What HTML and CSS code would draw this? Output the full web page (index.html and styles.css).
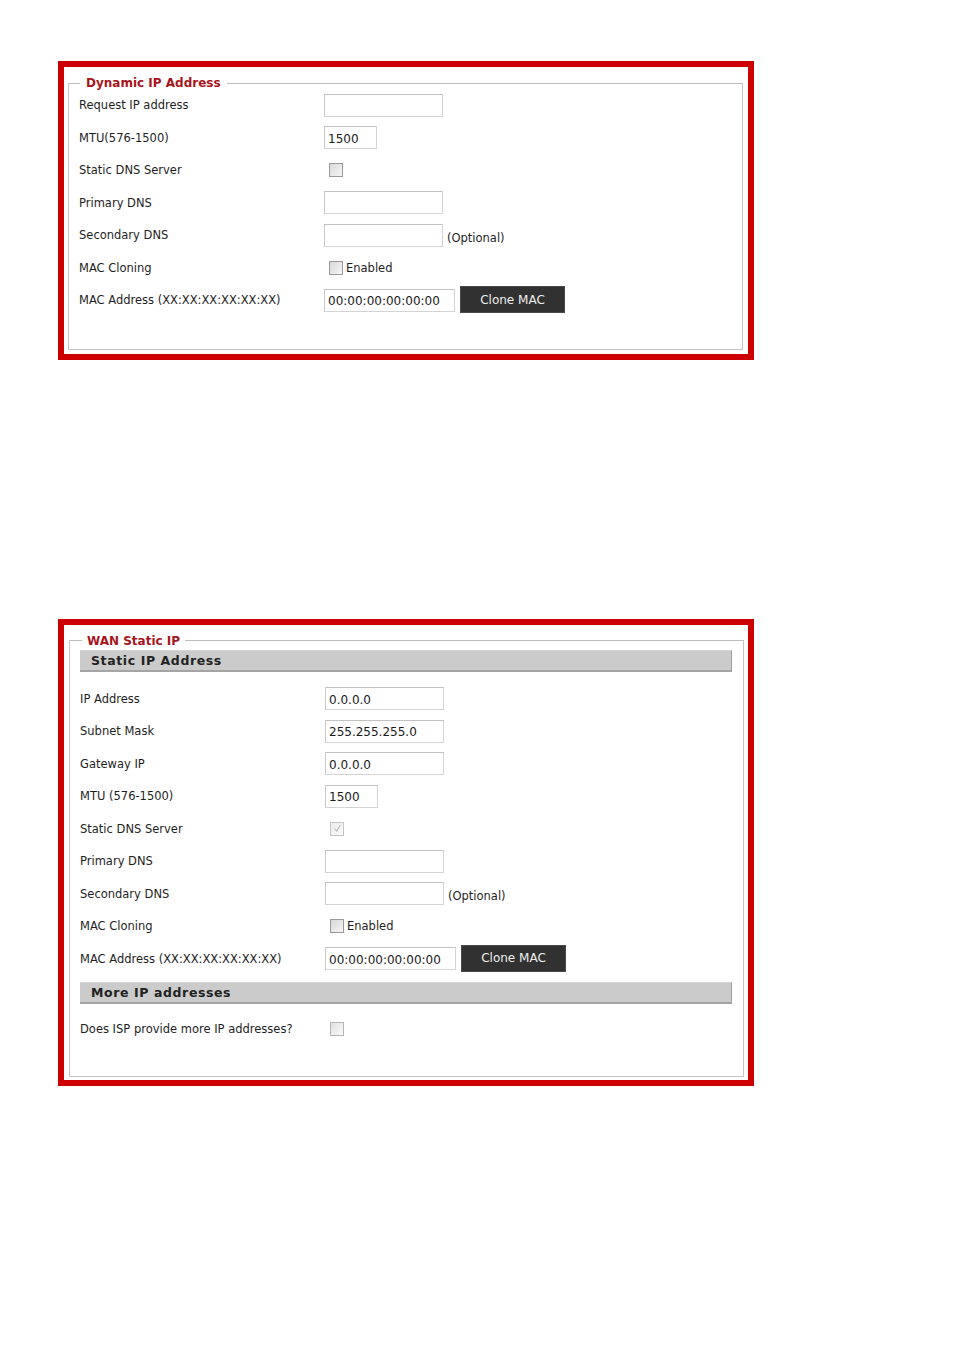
FILE: index.html
```html
<!DOCTYPE html>
<html lang="en">
<head>
    <meta charset="UTF-8">
    <meta name="viewport" content="width=device-width, initial-scale=1.0">
    <title>WAN Settings</title>
    <link rel="stylesheet" href="styles.css">
</head>
<body>
    <div class="frame frame-dynamic">
        <fieldset>
            <legend>Dynamic IP Address</legend>
            <div class="row">
                <span class="label">Request IP address</span>
                <span class="field"><input type="text" class="text"></span>
            </div>
            <div class="row">
                <span class="label">MTU(576-1500)</span>
                <span class="field"><input type="text" class="text short" value="1500"></span>
            </div>
            <div class="row">
                <span class="label">Static DNS Server</span>
                <span class="field"><span class="check"></span></span>
            </div>
            <div class="row">
                <span class="label">Primary DNS</span>
                <span class="field"><input type="text" class="text"></span>
            </div>
            <div class="row">
                <span class="label">Secondary DNS</span>
                <span class="field"><input type="text" class="text"><span class="note">(Optional)</span></span>
            </div>
            <div class="row">
                <span class="label">MAC Cloning</span>
                <span class="field"><span class="check"></span><span class="check-text">Enabled</span></span>
            </div>
            <div class="row">
                <span class="label">MAC Address (XX:XX:XX:XX:XX:XX)</span>
                <span class="field">
                    <input type="text" class="text mac" value="00:00:00:00:00:00">
                    <button class="btn">Clone MAC</button>
                </span>
            </div>
        </fieldset>
    </div>

    <div class="frame frame-static">
        <fieldset>
            <legend>WAN Static IP</legend>
            <div class="bar">Static IP Address</div>
            <div class="rows">
                <div class="row">
                    <span class="label">IP Address</span>
                    <span class="field"><input type="text" class="text" value="0.0.0.0"></span>
                </div>
                <div class="row">
                    <span class="label">Subnet Mask</span>
                    <span class="field"><input type="text" class="text" value="255.255.255.0"></span>
                </div>
                <div class="row">
                    <span class="label">Gateway IP</span>
                    <span class="field"><input type="text" class="text" value="0.0.0.0"></span>
                </div>
                <div class="row">
                    <span class="label">MTU (576-1500)</span>
                    <span class="field"><input type="text" class="text short" value="1500"></span>
                </div>
                <div class="row">
                    <span class="label">Static DNS Server</span>
                    <span class="field">
                        <span class="check checked">
                            <svg viewBox="0 0 13 13" width="11" height="11"><path d="M3 6.5 L5.5 9.5 L10 2.5" fill="none" stroke="#b8b8b8" stroke-width="1.2"/></svg>
                        </span>
                    </span>
                </div>
                <div class="row">
                    <span class="label">Primary DNS</span>
                    <span class="field"><input type="text" class="text"></span>
                </div>
                <div class="row">
                    <span class="label">Secondary DNS</span>
                    <span class="field"><input type="text" class="text"><span class="note">(Optional)</span></span>
                </div>
                <div class="row">
                    <span class="label">MAC Cloning</span>
                    <span class="field"><span class="check"></span><span class="check-text">Enabled</span></span>
                </div>
                <div class="row">
                    <span class="label">MAC Address (XX:XX:XX:XX:XX:XX)</span>
                    <span class="field">
                        <input type="text" class="text mac" value="00:00:00:00:00:00">
                        <button class="btn">Clone MAC</button>
                    </span>
                </div>
            </div>
            <div class="bar bar-more">More IP addresses</div>
            <div class="rows rows-more">
                <div class="row">
                    <span class="label">Does ISP provide more IP addresses?</span>
                    <span class="field"><span class="check light"></span></span>
                </div>
            </div>
        </fieldset>
    </div>
</body>
</html>
```

FILE: styles.css
```css
body {
    margin: 0;
    background-color: #ffffff;
    font-family: 'DejaVu Sans', Verdana, sans-serif;
    font-size: 11.5px;
    color: #1e1e1e;
}
.frame {
    box-sizing: border-box;
    width: 696px;
    margin-left: 58px;
    border: 6px solid #cc0000;
    background-color: #ffffff;
}
.frame-dynamic {
    margin-top: 61px;
    padding: 10px 5px 4px 4px;
}
.frame-static {
    margin-top: 259px;
    padding: 10px 4px 3px 5px;
}
fieldset {
    margin: 0;
    padding: 0 10px 32px 10px;
    border: 1px solid #c4c4c4;
    border-top-color: #bdbdbd;
}
.frame-static fieldset {
    padding-bottom: 30px;
}
legend {
    margin-left: 1px;
    padding: 0 6px;
    line-height: 12px;
    font-size: 12px;
    font-weight: bold;
    color: #a8141c;
}
.frame-static legend {
    margin-left: 2px;
    padding: 0 5px;
}
.row {
    display: grid;
    grid-template-columns: 245px 1fr;
    align-items: center;
    height: 32.5px;
}
.label {
    white-space: nowrap;
}
.field {
    display: flex;
    align-items: center;
}
.text {
    box-sizing: border-box;
    width: 119px;
    height: 23px;
    margin: 0;
    padding: 2px 3px 0 3px;
    border: 1px solid #d4d4d4;
    border-top-color: #c2c2c2;
    border-left-color: #cacaca;
    font-family: 'DejaVu Sans', Verdana, sans-serif;
    font-size: 12px;
    color: #1a1a1a;
    background-color: #ffffff;
    outline: none;
}
.short {
    width: 53px;
}
.mac {
    width: 131px;
}
.note {
    margin-left: 4px;
    margin-top: 5px;
}
.check {
    box-sizing: border-box;
    display: inline-flex;
    align-items: center;
    justify-content: center;
    width: 14px;
    height: 14px;
    margin-left: 5px;
    border: 1px solid #9a9a9a;
    background: linear-gradient(135deg, #d8d8d8, #f6f6f6);
}
.check.checked {
    border-color: #c4c4c4;
    background: linear-gradient(135deg, #ececec, #fafafa);
}
.check.light {
    border-color: #b4b4b4;
    background: linear-gradient(135deg, #e2e2e2, #f8f8f8);
}
.check-text {
    margin-left: 3px;
}
.btn {
    box-sizing: border-box;
    width: 105px;
    height: 27px;
    margin: -1px 0 0 5px;
    padding: 0;
    border: 1px solid #4a4a4a;
    background-color: #313131;
    color: #eeeeee;
    font-family: 'DejaVu Sans', Verdana, sans-serif;
    font-size: 12px;
}
.bar {
    box-sizing: border-box;
    height: 22px;
    margin-top: 3px;
    margin-right: 1px;
    padding: 2px 0 0 11px;
    background-color: #cbcbcb;
    border-top: 1px solid #d6d6d6;
    border-right: 1px solid #9e9e9e;
    border-bottom: 2px solid #a4a4a4;
    font-size: 12.5px;
    font-weight: bold;
    letter-spacing: 0.6px;
    color: #222222;
}
.rows {
    margin-top: 11px;
}
.bar-more {
    margin-top: 7px;
}
.rows-more {
    margin-top: 9px;
}
```
